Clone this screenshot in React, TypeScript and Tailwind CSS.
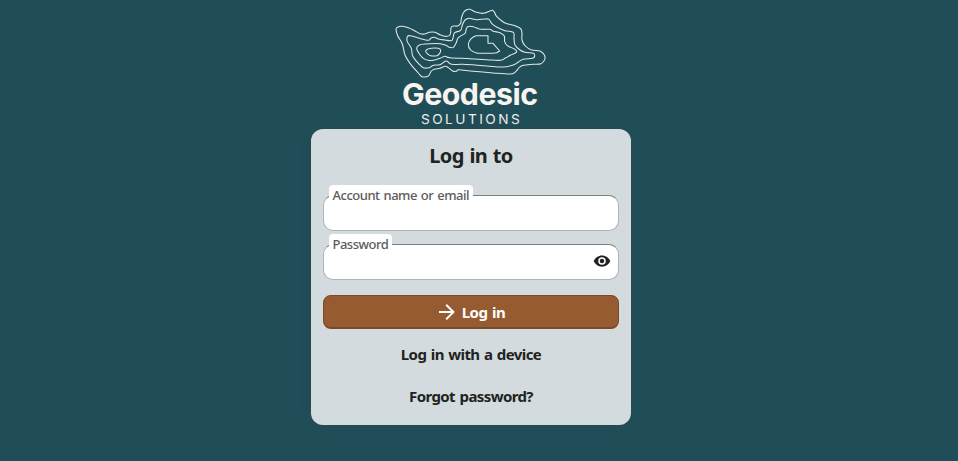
import { useState } from 'react';

type Point = [number, number];

const CONTOURS: Point[][] = [
  [
    [18, 88], [24, 81], [36, 79], [55, 83], [75, 93], [90, 101], [104, 102], [118, 97], [135, 97], [150, 104],
    [165, 109], [178, 107], [182, 98], [183, 83], [190, 78], [203, 78], [212, 70], [214, 55], [220, 38], [230, 29],
    [240, 28], [257, 36], [280, 40], [300, 33], [308, 31], [314, 38], [320, 49], [345, 69], [375, 77], [392, 86],
    [396, 100], [396, 120], [406, 138], [425, 150], [450, 153], [463, 165], [464, 179], [453, 191], [430, 193],
    [400, 196], [388, 202], [375, 217], [360, 222], [310, 219], [250, 214], [207, 209], [199, 214], [188, 213],
    [175, 203], [165, 199], [150, 205], [135, 207], [124, 213], [115, 228], [96, 230], [85, 219], [60, 190],
    [45, 165], [37, 132], [23, 107],
  ],
  [
    [52, 110], [60, 107], [85, 114], [115, 121], [122, 115], [132, 112], [145, 117], [165, 120], [185, 122],
    [190, 110], [194, 98], [212, 91], [217, 75], [225, 60], [238, 55], [260, 59], [285, 57], [297, 58], [305, 70],
    [320, 81], [345, 92], [370, 97], [372, 115], [375, 135], [390, 150], [405, 157], [430, 160], [434, 168],
    [428, 175], [400, 178], [385, 186], [370, 195], [340, 201], [290, 198], [220, 193], [185, 193], [172, 184],
    [165, 184], [150, 194], [130, 196], [118, 203], [100, 203], [85, 190], [68, 168], [64, 145], [52, 125],
  ],
  [
    [80, 145], [88, 135], [105, 132], [150, 131], [168, 136], [178, 142], [190, 142], [198, 130], [205, 113],
    [225, 100], [228, 90], [233, 80], [250, 80], [265, 86], [280, 88], [300, 88], [310, 94], [330, 98], [343, 108],
    [344, 125], [352, 137], [375, 148], [379, 157], [362, 165], [345, 175], [330, 181], [290, 179], [240, 176],
    [180, 173], [165, 169], [150, 175], [130, 181], [115, 181], [100, 175], [88, 162],
  ],
  [[107, 153], [116, 146], [145, 145], [152, 151], [149, 160], [141, 167], [122, 167], [112, 161]],
];

// Closed Catmull-Rom spline through the given points
function smoothPath(points: Point[]) {
  const n = points.length;
  let d = `M${points[0][0]} ${points[0][1]}`;
  for (let i = 0; i < n; i++) {
    const a = points[(i - 1 + n) % n];
    const b = points[i];
    const c = points[(i + 1) % n];
    const e = points[(i + 2) % n];
    d += `C${b[0] + (c[0] - a[0]) / 6} ${b[1] + (c[1] - a[1]) / 6} ${c[0] - (e[0] - b[0]) / 6} ${c[1] - (e[1] - b[1]) / 6} ${c[0]} ${c[1]}`;
  }
  return d + 'Z';
}

function Logo() {
  return (
    <svg viewBox="0 0 480 387" className="w-[160px] h-[129px] mr-0.5" role="img" aria-label="Geodesic Solutions">
      <g fill="none" stroke="#e5e8e5" strokeWidth="3.2" strokeLinejoin="round">
        {CONTOURS.map((points, i) => (
          <path key={i} d={smoothPath(points)} />
        ))}
        <path d="M258 107H294V130H309L329 153Q321 160 310 160H262C245 156 235 146 235 133C236 121 247 110 258 107Z" />
      </g>
      <text x="36" y="314" textLength="408" className="font-['Inter'] font-bold text-[91px] fill-[#f8f4f0]">
        Geodesic
      </text>
      <text x="93" y="371" textLength="296" className="font-['Inter'] text-[41px] fill-[#f1efeb]">
        SOLUTIONS
      </text>
    </svg>
  );
}

function App() {
  const [showPassword, setShowPassword] = useState(false);

  return (
    <div className="h-screen overflow-hidden bg-[#1f4e59] pr-4 flex flex-col items-center font-['Noto_Sans',sans-serif] text-[#222222]">
      <Logo />

      {/* Login card */}
      <main className="w-[320px] h-[296px] rounded-xl bg-[#d3dbde] px-3 shadow-[0_0_10px_rgba(48,72,76,0.8)] flex flex-col">
        <h1 className="mt-3 h-[30px] leading-[30px] text-center text-[20px] font-bold tracking-[-0.65px] [word-spacing:1.2px]">
          Log in to
        </h1>

        <form className="mt-6 flex flex-col" onSubmit={(e) => e.preventDefault()}>
          <Field id="user" label="Account name or email" type="text" labelClass="w-[144px]" />
          <div className="mt-[13px]">
            <Field id="password" label="Password" type={showPassword ? 'text' : 'password'} labelClass="w-[63px]">
              <button
                type="button"
                aria-label="Show password"
                onClick={() => setShowPassword(!showPassword)}
                className="absolute right-2 top-2"
              >
                <EyeIcon />
              </button>
            </Field>
          </div>
          <button
            type="submit"
            className="mt-[15px] h-[34px] rounded-lg border border-b-2 border-[#7c4928] bg-[#965b31] text-white flex items-center justify-center gap-[5px]"
          >
            <ArrowIcon />
            <span className="pt-px text-[15px] font-bold tracking-[-0.5px] [word-spacing:1.2px]">Log in</span>
          </button>
        </form>

        <a
          href="#"
          className="mt-2 h-[34px] leading-[34px] text-center text-[15px] font-bold tracking-[-0.6px] [word-spacing:1.2px]"
        >
          Log in with a device
        </a>
        <a
          href="#"
          className="mt-2 h-[34px] leading-[34px] text-center text-[15px] font-bold tracking-[-0.6px] [word-spacing:1.2px]"
        >
          Forgot password?
        </a>
      </main>
    </div>
  );
}

interface FieldProps {
  id: string;
  label: string;
  type: string;
  labelClass: string;
  children?: React.ReactNode;
}

function Field({ id, label, type, labelClass, children }: FieldProps) {
  return (
    <div className="relative h-9">
      <input
        id={id}
        type={type}
        className="block w-full h-9 px-3 rounded-[10px] border border-[#aeb3b5] border-t-[#7d7d7d] bg-white outline-none text-[15px]"
      />
      <label
        htmlFor={id}
        className={`${labelClass} absolute left-1.5 -top-2.5 h-5 leading-[21px] pl-[3.5px] rounded-t bg-white text-[13px] font-medium text-[#5c5c5c] whitespace-nowrap tracking-[-0.5px] [word-spacing:1.1px]`}
      >
        {label}
      </label>
      {children}
    </div>
  );
}

function EyeIcon() {
  return (
    <svg viewBox="0 0 24 24" className="w-[18px] h-[18px] fill-[#222222]">
      <path d="M12,9A3,3 0 0,0 9,12A3,3 0 0,0 12,15A3,3 0 0,0 15,12A3,3 0 0,0 12,9M12,17A5,5 0 0,1 7,12A5,5 0 0,1 12,7A5,5 0 0,1 17,12A5,5 0 0,1 12,17M12,4.5C7,4.5 2.73,7.61 1,12C2.73,16.39 7,19.5 12,19.5C17,19.5 21.27,16.39 23,12C21.27,7.61 17,4.5 12,4.5Z" />
    </svg>
  );
}

function ArrowIcon() {
  return (
    <svg viewBox="2 2 20 20" className="w-5 h-5 fill-white">
      <path d="M4,11V13H16L10.5,18.5L11.92,19.92L19.84,12L11.92,4.08L10.5,5.5L16,11H4Z" />
    </svg>
  );
}

export default App;
